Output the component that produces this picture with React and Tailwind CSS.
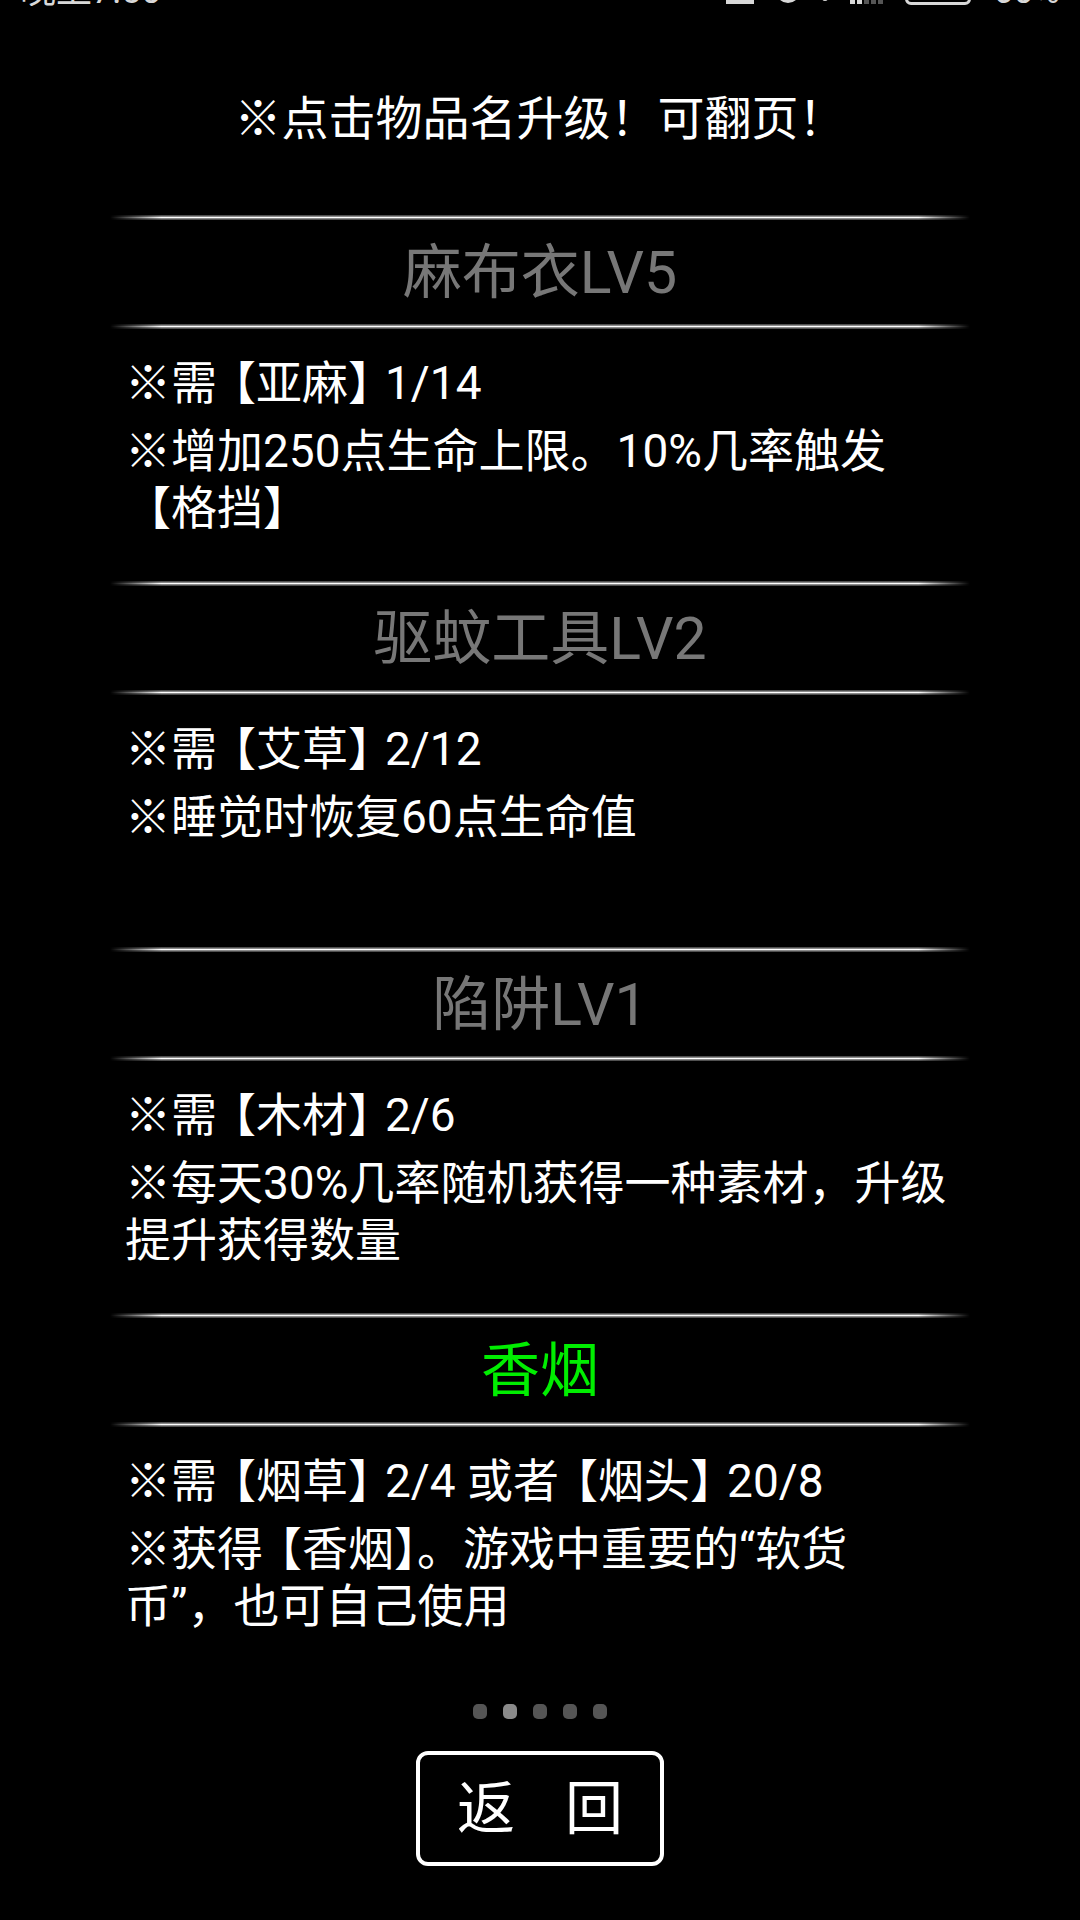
import React from 'react';

const items = [
  {
    name: '麻布衣LV5',
    green: false,
    lines: [['※需【亚麻】1/14'], ['※增加250点生命上限。10%几率触发', '【格挡】']],
  },
  {
    name: '驱蚊工具LV2',
    green: false,
    lines: [['※需【艾草】2/12'], ['※睡觉时恢复60点生命值']],
  },
  {
    name: '陷阱LV1',
    green: false,
    lines: [['※需【木材】2/6'], ['※每天30%几率随机获得一种素材，升级', '提升获得数量']],
  },
  {
    name: '香烟',
    green: true,
    lines: [['※需【烟草】2/4 或者【烟头】20/8'], ['※获得【香烟】。游戏中重要的“软货', '币”，也可自己使用']],
  },
];

// brackets in the game font are narrower than the full-width CJK ones,
// so tighten the char before 【 and the advance of 】
const fmt = (s) =>
  s.split(/(.(?=【)|】(?!。))/).map((part, i) => {
    if (i % 2 === 0) return part;
    if (part === '】') return <span key={i} className="tracking-[-9px]">】</span>;
    return <span key={i} className="tracking-[-7px]">{part}</span>;
  });

const Rule = () => (
  <div className="h-[5px] w-full bg-[linear-gradient(to_bottom,#333333,#999999_35%,#ffffff_50%,#999999_65%,#333333)] [mask-image:linear-gradient(to_right,transparent,#000_6%,#000_94%,transparent)]" />
);

const StatusBar = () => (
  <div className="h-[6px] overflow-hidden flex justify-between items-start px-[20px] text-[#d8d8d8]">
    <div className="text-[36px] leading-[36px] -mt-[27px]">晚上7:50</div>
    <div className="flex items-start gap-[22px] -mt-[27px] text-[36px] leading-[36px]">
      <span className="w-[28px] h-[31px] border-b-[4px] border-[#d8d8d8]" />
      <span className="w-[24px] h-[32px] border-[3px] border-[#d8d8d8] rounded-full mt-[-2px]" />
      <span className="w-[6px] h-[32px] rounded-full bg-[#d8d8d8] -mt-[4px]" />
      <div className="flex items-end gap-[2px] h-[31px]">
        <span className="w-[5px] h-[12px] bg-[#d8d8d8]" />
        <span className="w-[5px] h-[18px] bg-[#d8d8d8]" />
        <span className="w-[5px] h-[24px] bg-[#555]" />
        <span className="w-[5px] h-[28px] bg-[#555]" />
        <span className="w-[5px] h-[31px] bg-[#555]" />
      </div>
      <span className="w-[66px] h-[32px] border-[3px] border-[#d8d8d8] rounded-[6px]" />
      <span>60%</span>
    </div>
  </div>
);

export default function App() {
  return (
    <div className="min-h-screen w-full bg-black text-white font-['Roboto','Noto_Sans_CJK_SC',sans-serif]">
      <StatusBar />

      <div className="mt-[84px] text-center text-[47px] leading-[57px]">※点击物品名升级！可翻页！</div>

      <div className="w-[860px] mx-auto mt-[68px]">
        {items.map((item) => (
          <div key={item.name} className="h-[366px] flex flex-col">
            <Rule />
            <div
              className={
                'h-[104px] flex items-center justify-center text-[59px] leading-none ' +
                (item.green ? 'text-[#00ee00]' : 'text-[#777777]')
              }
            >
              {item.name}
            </div>
            <Rule />
            <div className="pl-[15px] pt-[26px] flex flex-col gap-[11px] text-[46px] leading-[57px]">
              {item.lines.map((para, i) => (
                <p key={i} className="whitespace-nowrap">
                  {para.map((ln, j) => (
                    <React.Fragment key={j}>
                      {j > 0 && <br />}
                      {fmt(ln)}
                    </React.Fragment>
                  ))}
                </p>
              ))}
            </div>
          </div>
        ))}
      </div>

      <div className="mt-[25px] flex justify-center gap-[16px]">
        {[0, 1, 2, 3, 4].map((i) => (
          <span
            key={i}
            className={'w-[14px] h-[15px] rounded-[5px] ' + (i === 1 ? 'bg-[#8a8a8a]' : 'bg-[#555555]')}
          />
        ))}
      </div>

      <div className="mt-[32px] flex justify-center">
        <button className="w-[248px] h-[115px] border-[4px] border-white rounded-[12px] flex items-center justify-center gap-[50px] text-[58px] leading-none text-white">
          <span>返</span>
          <span>回</span>
        </button>
      </div>
    </div>
  );
}
